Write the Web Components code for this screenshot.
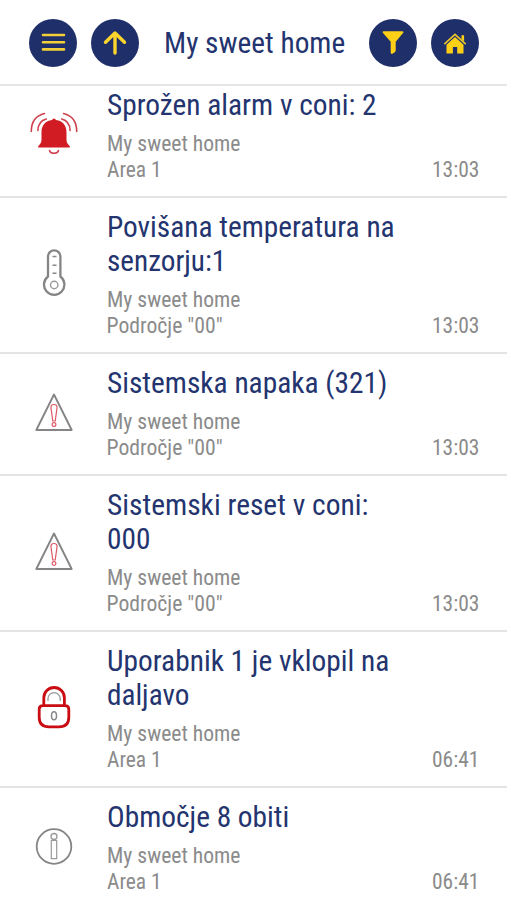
<!DOCTYPE html>
<html lang="sl">
<head>
<meta charset="utf-8">
<title>My sweet home</title>
<style>
html,body{margin:0;height:100%;overflow:hidden;background:#fff}
body{font-family:"Roboto Condensed",Roboto,"Liberation Sans",sans-serif;font-stretch:75%;color:#23346f}
</style>
</head>
<body>
<alarm-app></alarm-app>
<script>
const ICONS = {
  menu: `<svg viewBox="0 0 48 48"><path d="M14 16h21M14 23.2h21M14 30.4h21" stroke="#f3d03a" stroke-width="2.600" stroke-linecap="round"/></svg>`,
  up: `<svg viewBox="0 0 48 48"><path d="M24 34V14.5M14.5 23.3 24 14l9.500 9.300" fill="none" stroke="#fbd52c" stroke-width="3.400" stroke-linecap="round" stroke-linejoin="round"/></svg>`,
  filter: `<svg viewBox="0 0 48 48"><path d="M14.500 12.200h19q1.600.3.8 1.600l-7.600 9v8.700q-.2 1.300-1.300 2l-2 1.300q-1.600.5-1.700-1.200v-10.800l-7.900-9q-.7-1.300.7-1.600z" fill="#fdd017"/></svg>`,
  home: `<svg viewBox="0 0 48 48"><path d="M13.300 25.200 24 15.300l10.700 9.900" fill="none" stroke="#e9c42d" stroke-width="1.600"/><path d="M30.500 16.300h2.600v6.200l-2.600-2.400zM15.500 25.800 24 18l8.500 7.800v8.700h-6.300v-6.500h-4.300v6.500h-6.400z" fill="#fdd017"/></svg>`,
  bell: `<svg viewBox="0 0 54 54"><path d="M27 10.500q1.500 0 1.900 1.500C36 12.800 39.500 18 39.500 24v7.500c0 3 .8 4.300 3.300 6.800v1.200H11.200v-1.200c2.500-2.500 3.300-3.800 3.300-6.800V24c0-6 3.500-11.200 10.600-12q.4-1.500 1.900-1.500z" fill="#d01c22"/><g fill="none" stroke="#cf4350" stroke-width="1.600" stroke-linecap="round"><path d="M22.500 42.500c1 3.700 8 3.700 9 0M17.500 5.500C9 7.500 4.300 14 4.300 23.500M19.300 11C13.500 12.500 11 16.500 10.900 22.500M36.500 5.500C45 7.500 49.700 14 49.700 23.500M34.700 11C40.500 12.500 43 16.500 43.100 22.500"/></g></svg>`,
  thermo: `<svg viewBox="0 0 54 54"><path d="M21 29.500V9.500a6.200 6.200 0 0 1 12.400 0v20a10.200 10.200 0 1 1-12.400 0z" fill="none" stroke="#858585" stroke-width="2.300"/><circle cx="27.200" cy="38" r="3.700" fill="none" stroke="#999" stroke-width="1.400"/><path d="M25.500 9.500h4M25.500 18.300h4M25.500 26.300h4" stroke="#888" stroke-width="1.400"/></svg>`,
  warn: `<svg viewBox="0 0 54 54"><path d="M27 8.500 44.700 44H9.300z" fill="none" stroke="#858585" stroke-width="1.900" stroke-linejoin="round"/><path d="M27 18.500c2.300 0 3.200 1.400 3 3.600L28.200 35h-2.400L24 22.100c-.2-2.200.7-3.600 3-3.600z" fill="none" stroke="#df5865" stroke-width="1.200"/><circle cx="27" cy="38.500" r="1.900" fill="none" stroke="#df5865" stroke-width="1.200"/></svg>`,
  lock: `<svg viewBox="0 0 54 54"><g fill="none"><path d="M16.800 24.500V16.800a10.300 10.300 0 0 1 20.600 0v7.700M16 24.600h22q3.800 0 3.800 3.600v8q0 9.600-9.800 9.600H22q-9.800 0-9.800-9.600v-8q0-3.600 3.800-3.600z" stroke="#c90d13" stroke-width="2.800"/><path d="M21 20v-2.300a6.100 6.100 0 0 1 12.200 0V20" stroke="#999" stroke-width="1.300"/><ellipse cx="27" cy="34.800" rx="2.500" ry="4" stroke="#888" stroke-width="1.500"/></g></svg>`,
  info: `<svg viewBox="0 0 54 54"><g fill="none" stroke="#858585"><circle cx="27" cy="26.500" r="17.300" stroke-width="1.800"/><circle cx="27" cy="16.500" r="3" stroke="#999" stroke-width="1.300"/><path d="M24.300 20.500h5.400v18.200h-5.400z" stroke="#999" stroke-width="1.200"/></g></svg>`
};

class UiIcon extends HTMLElement {
  connectedCallback() {
    this.attachShadow({mode: 'open'}).innerHTML =
      `<style>:host{display:block}svg{display:block;width:100%;height:100%}</style>` + ICONS[this.getAttribute('name')];
  }
}
customElements.define('ui-icon', UiIcon);

class RoundButton extends HTMLElement {
  connectedCallback() {
    this.attachShadow({mode: 'open'}).innerHTML = `<style>
      :host{display:block;flex:none;width:48px;height:48px;border-radius:50%;background:#1e2f69}
      button{all:unset;display:block;width:48px;height:48px}
      ui-icon{width:48px;height:48px}</style>
      <button aria-label="${this.getAttribute('icon')}"><ui-icon name="${this.getAttribute('icon')}"></ui-icon></button>`;
  }
}
customElements.define('round-button', RoundButton);

/* One line of text, condensed horizontally to the width it is given. */
class FitLine extends HTMLElement {
  connectedCallback() {
    const w = +this.getAttribute('w');
    const root = this.attachShadow({mode: 'open'});
    root.innerHTML = `<style>:host{display:block;width:${w}px;white-space:nowrap}
      span{display:inline-block;transform-origin:0 50%}</style><span><slot></slot></span>`;
    const span = root.querySelector('span');
    const natural = span.offsetWidth;
    if (natural) span.style.transform = `scaleX(${w / natural})`;
  }
}
customElements.define('fit-line', FitLine);

class AppHeader extends HTMLElement {
  connectedCallback() {
    this.attachShadow({mode: 'open'}).innerHTML = `<style>
      :host{display:flex;box-sizing:border-box;height:86px;padding:2px 28px 0 29px;align-items:center;gap:14px;border-bottom:2px solid #e6e6e6;background:#fff}
      .title{flex:1;display:flex;justify-content:center;font-size:29.500px;line-height:34px}
      </style>
      <round-button icon="menu"></round-button><round-button icon="up"></round-button>
      <div class="title"><fit-line w="181">My sweet home</fit-line></div>
      <round-button icon="filter"></round-button><round-button icon="home"></round-button>`;
  }
}
customElements.define('app-header', AppHeader);

class EventRow extends HTMLElement {
  connectedCallback() {
    const a = n => this.getAttribute(n);
    this.attachShadow({mode: 'open'}).innerHTML = `<style>
      :host{display:grid;box-sizing:border-box;grid-template-columns:54px 1fr;column-gap:26px;align-items:center;padding:12px 28px 14px 26.500px;border-bottom:2px solid #e4e4e4}
      ui-icon{width:54px;height:54px}
      .title{font-size:29.700px;line-height:34px}
      .meta{display:flex;justify-content:space-between;align-items:flex-end;margin-top:9px;color:#8b8b8b;font-size:21.700px;line-height:25.500px}
      </style>
      <ui-icon name="${a('icon')}"></ui-icon>
      <div><div class="title"><slot></slot></div>
      <div class="meta"><div><fit-line w="133.500">My sweet home</fit-line><fit-line w="${a('area-w')}">${a('area')}</fit-line></div>
      <fit-line w="47.500">${a('time')}</fit-line></div></div>`;
  }
}
customElements.define('event-row', EventRow);

class AlarmApp extends HTMLElement {
  connectedCallback() {
    const rows = [
      ['bell', [['Sprožen alarm v coni: 2', 270]], 'Area 1', '13:03'],
      ['thermo', [['Povišana temperatura na', 287.5], ['senzorju:1', 119]], 'Področje "00"', '13:03'],
      ['warn', [['Sistemska napaka (321)', 280]], 'Področje "00"', '13:03'],
      ['warn', [['Sistemski reset v coni:', 261], ['000', 43.5]], 'Področje "00"', '13:03'],
      ['lock', [['Uporabnik 1 je vklopil na', 282], ['daljavo', 82.5]], 'Area 1', '06:41'],
      ['info', [['Območje 8 obiti', 182]], 'Area 1', '06:41']
    ];
    this.attachShadow({mode: 'open'}).innerHTML = `<style>
      :host{display:flex;flex-direction:column;width:100%;height:900px;overflow:hidden;background:#fff}
      app-header{flex:none}
      main{flex:1;min-height:0;display:flex;flex-direction:column;justify-content:flex-start;overflow:hidden}
      event-row{flex:none}
      event-row:first-child{margin-top:-10px}
      </style><app-header></app-header><main>` +
      rows.map(([i, t, ar, tm]) => `<event-row icon="${i}" area='${ar}' area-w="${ar === 'Area 1' ? 54.5 : 116}" time="${tm}">` +
        t.map(([s, w]) => `<fit-line w="${w}">${s}</fit-line>`).join('') + `</event-row>`).join('') + `</main>`;
  }
}
customElements.define('alarm-app', AlarmApp);
</script>
</body>
</html>
